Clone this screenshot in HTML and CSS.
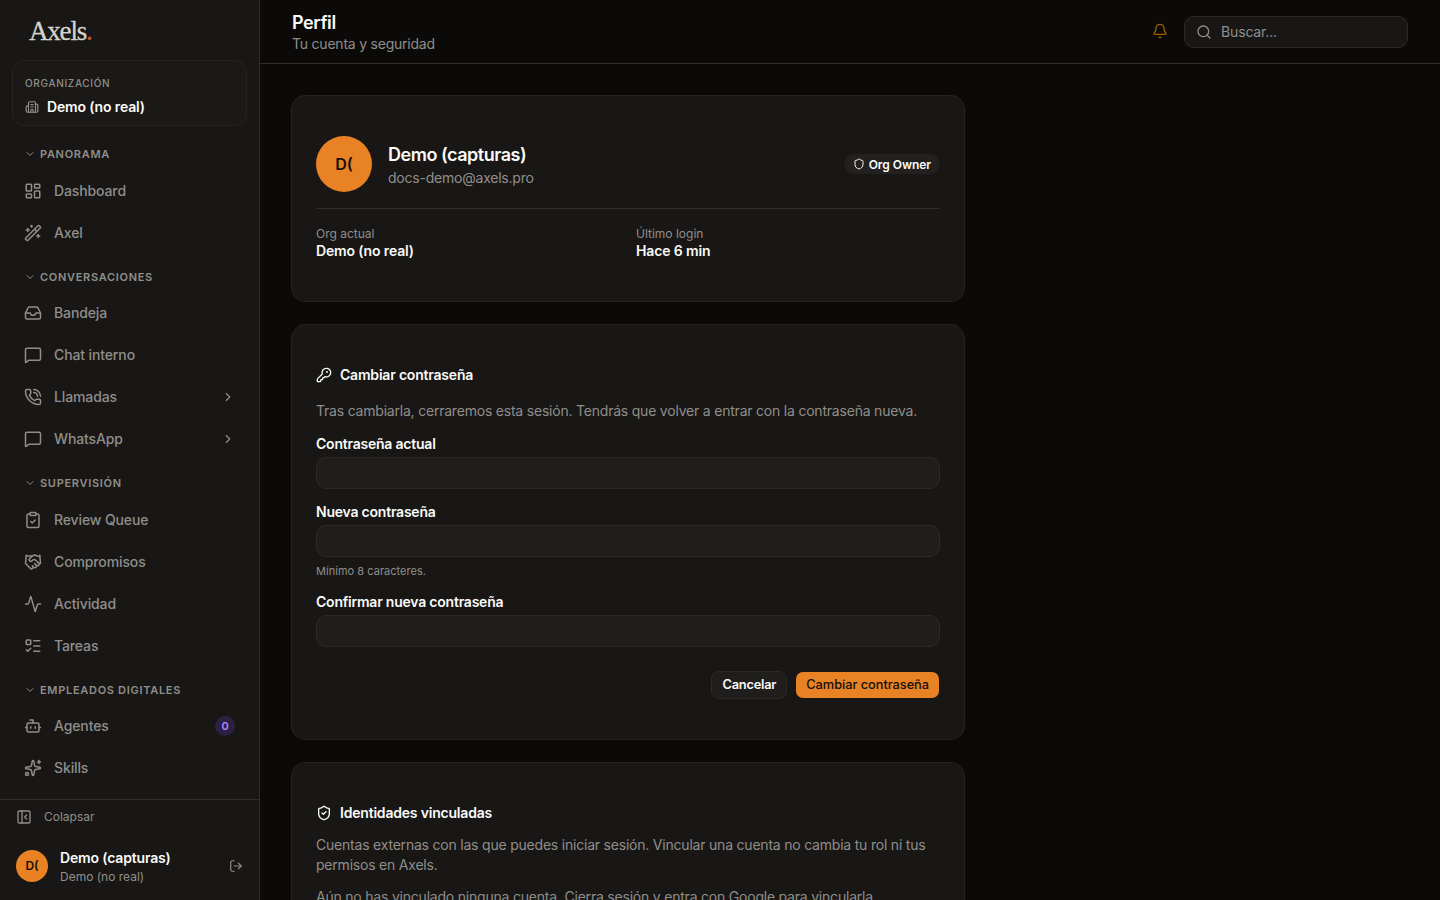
FILE: index.html
```html
<!DOCTYPE html>
<html lang="es">
<head>
  <meta charset="utf-8">
  <title>Perfil - Axels</title>
  <link rel="stylesheet" href="styles.css">
</head>
<body>
  <aside class="sidebar">
    <div class="logo">Axels<span>.</span></div>
    <div class="org">
      <div class="org-label">Organización</div>
      <div class="org-name">
        <svg class="icon" viewBox="0 0 24 24"><path d="M10 12h4"/><path d="M10 8h4"/><path d="M14 21v-3a2 2 0 0 0-4 0v3"/><path d="M6 10H4a2 2 0 0 0-2 2v7a2 2 0 0 0 2 2h16a2 2 0 0 0 2-2V9a2 2 0 0 0-2-2h-2"/><path d="M6 21V5a2 2 0 0 1 2-2h8a2 2 0 0 1 2 2v16"/></svg>
        Demo (no real)
      </div>
    </div>

    <nav class="nav">
      <div class="nav-title"><svg class="icon" viewBox="0 0 24 24"><path d="m6 9 6 6 6-6"/></svg>Panorama</div>
      <a class="nav-item"><svg class="icon" viewBox="0 0 24 24"><rect width="7" height="9" x="3" y="3" rx="1"/><rect width="7" height="5" x="14" y="3" rx="1"/><rect width="7" height="9" x="14" y="12" rx="1"/><rect width="7" height="5" x="3" y="16" rx="1"/></svg>Dashboard</a>
      <a class="nav-item"><svg class="icon" viewBox="0 0 24 24"><path d="m21.64 3.64-1.28-1.28a1.21 1.21 0 0 0-1.72 0L2.36 18.64a1.21 1.21 0 0 0 0 1.72l1.28 1.28a1.2 1.2 0 0 0 1.72 0L21.64 5.36a1.2 1.2 0 0 0 0-1.72"/><path d="m14 7 3 3"/><path d="M5 6v4"/><path d="M19 14v4"/><path d="M10 2v2"/><path d="M7 8H3"/><path d="M21 16h-4"/><path d="M11 3H9"/></svg>Axel</a>

      <div class="nav-title"><svg class="icon" viewBox="0 0 24 24"><path d="m6 9 6 6 6-6"/></svg>Conversaciones</div>
      <a class="nav-item"><svg class="icon" viewBox="0 0 24 24"><path d="M22 12h-6l-2 3h-4l-2-3H2"/><path d="M5.45 5.11 2 12v6a2 2 0 0 0 2 2h16a2 2 0 0 0 2-2v-6l-3.45-6.89A2 2 0 0 0 16.76 4H7.24a2 2 0 0 0-1.79 1.11z"/></svg>Bandeja</a>
      <a class="nav-item"><svg class="icon" viewBox="0 0 24 24"><path d="M22 17a2 2 0 0 1-2 2H6.828a2 2 0 0 0-1.414.586l-2.202 2.202A.71.71 0 0 1 2 21.286V5a2 2 0 0 1 2-2h16a2 2 0 0 1 2 2z"/></svg>Chat interno</a>
      <a class="nav-item"><svg class="icon" viewBox="0 0 24 24"><path d="M13 2a9 9 0 0 1 9 9"/><path d="M13 6a5 5 0 0 1 5 5"/><path d="M13.832 16.568a1 1 0 0 0 1.213-.303l.355-.465A2 2 0 0 1 17 15h3a2 2 0 0 1 2 2v3a2 2 0 0 1-2 2A18 18 0 0 1 2 4a2 2 0 0 1 2-2h3a2 2 0 0 1 2 2v3a2 2 0 0 1-.8 1.6l-.468.351a1 1 0 0 0-.292 1.233 14 14 0 0 0 6.392 6.384"/></svg>Llamadas<svg class="icon arrow" viewBox="0 0 24 24"><path d="m9 18 6-6-6-6"/></svg></a>
      <a class="nav-item"><svg class="icon" viewBox="0 0 24 24"><path d="M22 17a2 2 0 0 1-2 2H6.828a2 2 0 0 0-1.414.586l-2.202 2.202A.71.71 0 0 1 2 21.286V5a2 2 0 0 1 2-2h16a2 2 0 0 1 2 2z"/></svg>WhatsApp<svg class="icon arrow" viewBox="0 0 24 24"><path d="m9 18 6-6-6-6"/></svg></a>

      <div class="nav-title"><svg class="icon" viewBox="0 0 24 24"><path d="m6 9 6 6 6-6"/></svg>Supervisión</div>
      <a class="nav-item"><svg class="icon" viewBox="0 0 24 24"><rect width="8" height="4" x="8" y="2" rx="1"/><path d="M16 4h2a2 2 0 0 1 2 2v14a2 2 0 0 1-2 2H6a2 2 0 0 1-2-2V6a2 2 0 0 1 2-2h2"/><path d="m9 14 2 2 4-4"/></svg>Review Queue</a>
      <a class="nav-item"><svg class="icon" viewBox="0 0 24 24"><path d="m11 17 2 2a1 1 0 1 0 3-3"/><path d="m14 14 2.5 2.5a1 1 0 1 0 3-3l-3.88-3.88a3 3 0 0 0-4.24 0l-.88.88a1 1 0 1 1-3-3l2.81-2.81a5.79 5.79 0 0 1 7.06-.87l.47.28a2 2 0 0 0 1.42.25L21 4"/><path d="m21 3 1 11h-2"/><path d="M3 3 2 14l6.5 6.5a1 1 0 1 0 3-3"/><path d="M3 4h8"/></svg>Compromisos</a>
      <a class="nav-item"><svg class="icon" viewBox="0 0 24 24"><path d="M22 12h-2.48a2 2 0 0 0-1.93 1.46l-2.35 8.36a.25.25 0 0 1-.48 0L9.24 2.18a.25.25 0 0 0-.48 0l-2.35 8.36A2 2 0 0 1 4.49 12H2"/></svg>Actividad</a>
      <a class="nav-item"><svg class="icon" viewBox="0 0 24 24"><rect x="3" y="4" width="6" height="6" rx="1"/><path d="m3 17 2 2 4-4"/><path d="M13 5h8"/><path d="M13 12h8"/><path d="M13 19h8"/></svg>Tareas</a>

      <div class="nav-title"><svg class="icon" viewBox="0 0 24 24"><path d="m6 9 6 6 6-6"/></svg>Empleados digitales</div>
      <a class="nav-item"><svg class="icon" viewBox="0 0 24 24"><path d="M12 8V4H8"/><rect width="16" height="12" x="4" y="8" rx="2"/><path d="M2 14h2"/><path d="M20 14h2"/><path d="M15 13v2"/><path d="M9 13v2"/></svg>Agentes<span class="count">0</span></a>
      <a class="nav-item"><svg class="icon" viewBox="0 0 24 24"><path d="M11.017 2.814a1 1 0 0 1 1.966 0l1.051 5.558a2 2 0 0 0 1.594 1.594l5.558 1.051a1 1 0 0 1 0 1.966l-5.558 1.051a2 2 0 0 0-1.594 1.594l-1.051 5.558a1 1 0 0 1-1.966 0l-1.051-5.558a2 2 0 0 0-1.594-1.594l-5.558-1.051a1 1 0 0 1 0-1.966l5.558-1.051a2 2 0 0 0 1.594-1.594z"/><path d="M20 2v4"/><path d="M22 4h-4"/><circle cx="4" cy="20" r="2"/></svg>Skills</a>
    </nav>

    <div class="sidebar-footer">
      <div class="collapse">
        <svg class="icon" viewBox="0 0 24 24"><rect width="18" height="18" x="3" y="3" rx="2"/><path d="M9 3v18"/><path d="m16 15-3-3 3-3"/></svg>
        Colapsar
      </div>
      <div class="user">
        <div class="avatar avatar-sm">D(</div>
        <div>
          <div class="user-name">Demo (capturas)</div>
          <div class="user-org">Demo (no real)</div>
        </div>
        <svg class="icon logout" viewBox="0 0 24 24"><path d="m16 17 5-5-5-5"/><path d="M21 12H9"/><path d="M9 21H5a2 2 0 0 1-2-2V5a2 2 0 0 1 2-2h4"/></svg>
      </div>
    </div>
  </aside>

  <div class="page">
    <header class="topbar">
      <div>
        <h1>Perfil</h1>
        <p>Tu cuenta y seguridad</p>
      </div>
      <div class="topbar-right">
        <svg class="icon bell" viewBox="0 0 24 24"><path d="M10.268 21a2 2 0 0 0 3.464 0"/><path d="M3.262 15.326A1 1 0 0 0 4 17h16a1 1 0 0 0 .74-1.673C19.41 13.956 18 12.499 18 8A6 6 0 0 0 6 8c0 4.499-1.411 5.956-2.738 7.326"/></svg>
        <div class="search">
          <svg class="icon" viewBox="0 0 24 24"><path d="m21 21-4.34-4.34"/><circle cx="11" cy="11" r="8"/></svg>
          Buscar...
        </div>
      </div>
    </header>

    <main class="content">
      <section class="card">
        <div class="profile">
          <div class="avatar">D(</div>
          <div>
            <div class="profile-name">Demo (capturas)</div>
            <div class="profile-email">docs-demo@axels.pro</div>
          </div>
          <span class="badge">
            <svg class="icon" viewBox="0 0 24 24"><path d="M20 13c0 5-3.5 7.5-7.66 8.95a1 1 0 0 1-.67-.01C7.5 20.5 4 18 4 13V6a1 1 0 0 1 1-1c2 0 4.5-1.2 6.24-2.72a1.17 1.17 0 0 1 1.52 0C14.51 3.81 17 5 19 5a1 1 0 0 1 1 1z"/></svg>
            Org Owner
          </span>
        </div>
        <div class="facts">
          <div>
            <div class="fact-label">Org actual</div>
            <div class="fact-value">Demo (no real)</div>
          </div>
          <div>
            <div class="fact-label">Último login</div>
            <div class="fact-value">Hace 6 min</div>
          </div>
        </div>
      </section>

      <section class="card">
        <h2>
          <svg class="icon" viewBox="0 0 24 24"><path d="M2.586 17.414A2 2 0 0 0 2 18.828V21a1 1 0 0 0 1 1h3a1 1 0 0 0 1-1v-1a1 1 0 0 1 1-1h1a1 1 0 0 0 1-1v-1a1 1 0 0 1 1-1h.172a2 2 0 0 0 1.414-.586l.814-.814a6.5 6.5 0 1 0-4-4z"/><circle cx="16.5" cy="7.5" r=".5" fill="currentColor"/></svg>
          Cambiar contraseña
        </h2>
        <form class="form">
          <p class="text">Tras cambiarla, cerraremos esta sesión. Tendrás que volver a entrar con la contraseña nueva.</p>
          <div class="field">
            <label for="current">Contraseña actual</label>
            <input id="current" type="password">
          </div>
          <div class="field">
            <label for="new">Nueva contraseña</label>
            <input id="new" type="password">
            <p class="hint">Mínimo 8 caracteres.</p>
          </div>
          <div class="field">
            <label for="confirm">Confirmar nueva contraseña</label>
            <input id="confirm" type="password">
          </div>
          <div class="actions">
            <button type="button" class="btn">Cancelar</button>
            <button type="button" class="btn btn-primary">Cambiar contraseña</button>
          </div>
        </form>
      </section>

      <section class="card">
        <h2>
          <svg class="icon" viewBox="0 0 24 24"><path d="M20 13c0 5-3.5 7.5-7.66 8.95a1 1 0 0 1-.67-.01C7.5 20.5 4 18 4 13V6a1 1 0 0 1 1-1c2 0 4.5-1.2 6.24-2.72a1.17 1.17 0 0 1 1.52 0C14.51 3.81 17 5 19 5a1 1 0 0 1 1 1z"/><path d="m9 12 2 2 4-4"/></svg>
          Identidades vinculadas
        </h2>
        <div class="linked">
          <p class="text">Cuentas externas con las que puedes iniciar sesión. Vincular una cuenta no cambia tu rol ni tus permisos en Axels.</p>
          <p class="text">Aún no has vinculado ninguna cuenta. Cierra sesión y entra con Google para vincularla.</p>
        </div>
      </section>
    </main>
  </div>
</body>
</html>
```
FILE: styles.css
```css
* {
  box-sizing: border-box;
}

body {
  margin: 0;
  display: flex;
  height: 100vh;
  overflow: hidden;
  background: #0b0a08;
  color: #fafaf9;
  font-family: Inter, sans-serif;
  font-size: 14px;
  line-height: 20px;
}

h1, h2, p {
  margin: 0;
}

.icon {
  width: 16px;
  height: 16px;
  flex-shrink: 0;
  fill: none;
  stroke: currentColor;
  stroke-width: 2;
  stroke-linecap: round;
  stroke-linejoin: round;
}

/* sidebar */
.sidebar {
  width: 260px;
  flex-shrink: 0;
  display: flex;
  flex-direction: column;
  background: #181715;
  border-right: 1px solid #2f2e2c;
}

.logo {
  height: 60px;
  flex-shrink: 0;
  padding: 15px 0 0 29px;
  font-family: "Liberation Serif", serif;
  font-size: 27px;
  line-height: 32px;
  letter-spacing: -1.2px;
  color: #d6d3cb;
  -webkit-text-stroke: 0.3px currentColor;
}

.logo span {
  color: #c4573a;
}

.org {
  height: 66px;
  flex-shrink: 0;
  margin: 0 12px;
  padding: 15px 12px 0;
  border: 1px solid #252422;
  border-radius: 12px;
  background: #1a1917;
}

.org-label {
  font-size: 10px;
  font-weight: 500;
  line-height: 15px;
  letter-spacing: 0.68px;
  text-transform: uppercase;
  color: #908e8b;
}

.org-name {
  display: flex;
  align-items: center;
  gap: 8px;
  margin-top: 6px;
  font-weight: 600;
  letter-spacing: -0.14px;
}

.org-name .icon {
  width: 14px;
  height: 14px;
  color: #908e8b;
}

.nav {
  flex: 1;
  min-height: 0;
  overflow: hidden;
  padding: 4.2px 12px 0;
  color: #908e8b;
}

.nav-title {
  display: flex;
  align-items: center;
  gap: 4px;
  height: 24px;
  margin: 12px 0 4.5px;
  padding-left: 12px;
  font-size: 11px;
  font-weight: 600;
  letter-spacing: 0.7px;
  text-transform: uppercase;
}

.nav-title .icon {
  width: 12px;
  height: 12px;
}

.nav-item {
  display: flex;
  align-items: center;
  gap: 12px;
  height: 40px;
  margin-bottom: 2px;
  padding: 0 12px;
  font-weight: 500;
  letter-spacing: -0.12px;
}

.nav-item .icon {
  width: 18px;
  height: 18px;
}

.nav-item .arrow {
  width: 14px;
  height: 14px;
  margin-left: auto;
}

.count {
  width: 20px;
  height: 20px;
  margin-left: auto;
  border-radius: 50%;
  background: #2d2141;
  color: #a684ff;
  font-size: 11px;
  font-weight: 600;
  text-align: center;
}

.sidebar-footer {
  height: 101px;
  flex-shrink: 0;
  border-top: 1px solid #2f2e2c;
  color: #908e8b;
  font-size: 12px;
}

.collapse {
  display: flex;
  align-items: center;
  gap: 12px;
  height: 33px;
  padding-left: 16px;
}

.user {
  display: flex;
  align-items: center;
  gap: 12px;
  height: 66px;
  padding: 0 16px;
}

.user-name {
  color: #fafaf9;
  font-size: 14px;
  font-weight: 600;
  letter-spacing: -0.17px;
}

.user-org {
  line-height: 17px;
}

.logout {
  width: 14px;
  height: 14px;
  margin-left: auto;
}

.avatar {
  display: flex;
  align-items: center;
  justify-content: center;
  width: 56px;
  height: 56px;
  border-radius: 50%;
  background: #e98125;
  color: #12100c;
  font-size: 16px;
  font-weight: 600;
}

.avatar-sm {
  width: 32px;
  height: 32px;
  font-size: 12px;
}

/* top bar */
.page {
  flex: 1;
  min-width: 0;
  overflow: hidden;
}

.topbar {
  display: flex;
  align-items: center;
  justify-content: space-between;
  height: 64px;
  padding: 0 32px;
  border-bottom: 1px solid #2f2e2c;
}

.topbar h1 {
  padding-top: 1px;
  font-size: 18px;
  font-weight: 600;
  line-height: 22px;
  letter-spacing: -0.4px;
}

.topbar p {
  color: #908e8b;
  letter-spacing: -0.22px;
  line-height: 19px;
}

.topbar-right {
  display: flex;
  align-items: center;
  gap: 16px;
}

.bell {
  margin-bottom: 1px;
  color: #a06102;
}

.search {
  display: flex;
  align-items: center;
  gap: 9px;
  width: 224px;
  height: 32px;
  padding: 0 11px;
  border: 1px solid #2b2a28;
  border-radius: 10px;
  background: #181715;
  color: #908e8b;
  letter-spacing: -0.15px;
}

/* cards */
.content {
  display: flex;
  flex-direction: column;
  gap: 24px;
  width: 736px;
  padding: 32px;
}

.card {
  padding: 40px 24px;
  border-radius: 14px;
  background: #181715;
  box-shadow: 0 0 0 1px #252422;
}

.card h2 {
  display: flex;
  align-items: center;
  gap: 8px;
  font-size: 14px;
  font-weight: 600;
  letter-spacing: -0.2px;
}

.text {
  color: #908e8b;
  letter-spacing: -0.21px;
}

.profile {
  display: flex;
  align-items: center;
  gap: 16px;
}

.profile-name {
  padding-top: 1px;
  font-size: 18px;
  font-weight: 600;
  line-height: 27px;
  letter-spacing: -0.48px;
}

.profile-email {
  color: #908e8b;
  letter-spacing: -0.22px;
}

.badge {
  display: flex;
  align-items: center;
  gap: 4px;
  height: 20px;
  margin-left: auto;
  padding: 1px 9px 0;
  border-radius: 10px;
  background: #22211f;
  font-size: 12px;
  font-weight: 600;
  letter-spacing: -0.05px;
}

.badge .icon {
  width: 12px;
  height: 12px;
  margin-bottom: 1px;
}

.facts {
  display: grid;
  grid-template-columns: 1fr 1fr;
  gap: 16px;
  margin-top: 16px;
  padding-top: 16px;
  border-top: 1px solid #2f2e2c;
}

.fact-label {
  padding-top: 1px;
  font-size: 12px;
  line-height: 15px;
  color: #908e8b;
}

.fact-value {
  font-weight: 600;
  letter-spacing: -0.14px;
}

.form {
  display: flex;
  flex-direction: column;
  gap: 16px;
  margin-top: 16px;
}

.field {
  display: flex;
  flex-direction: column;
  gap: 6px;
}

.field label {
  font-weight: 600;
  line-height: 14px;
  letter-spacing: -0.22px;
}

.field input {
  width: 100%;
  height: 32px;
  border: 1px solid #2b2a28;
  border-radius: 10px;
  background: #1f1e1c;
}

.hint {
  padding-top: 1px;
  font-size: 11px;
  line-height: 14.5px;
  letter-spacing: 0.03px;
  color: #908e8b;
}

.actions {
  display: flex;
  justify-content: flex-end;
  gap: 8px;
  padding-top: 8px;
}

.btn {
  height: 28px;
  padding: 0 10px;
  border: 1px solid #2b2a28;
  border-radius: 8px;
  background: #1f1e1c;
  background-clip: padding-box;
  color: #fafaf9;
  font-family: inherit;
  font-size: 12.8px;
  font-weight: 600;
  letter-spacing: -0.2px;
}

.btn-primary {
  border-color: transparent;
  background-color: #e98125;
  color: #12100c;
  font-weight: 500;
  letter-spacing: -0.04px;
}

.linked {
  display: flex;
  flex-direction: column;
  gap: 12px;
  margin-top: 12px;
}
```
